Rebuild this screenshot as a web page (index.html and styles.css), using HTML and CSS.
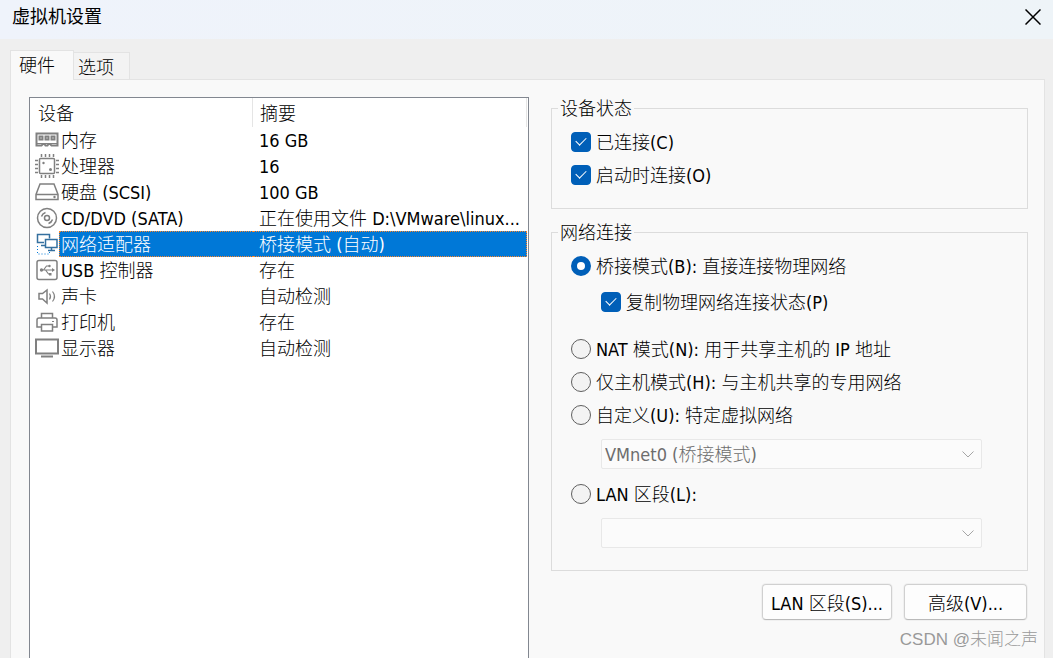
FILE: index.html
```html
<!DOCTYPE html>
<html lang="zh-CN">
<head>
	<meta charset="UTF-8">
	<meta name="viewport" content="width=device-width, initial-scale=1.0">
	<title>虚拟机设置</title>
	<link rel="stylesheet" href="styles.css">
</head>
<body>
	<header class="titulo">
		<h1>虚拟机设置</h1>
		<button type="button" class="fechar" aria-label="关闭">
			<svg width="16" height="16" viewBox="0 0 16 16"><path d="M0.5 0.5L15.5 15.5M15.5 0.5L0.5 15.5"/></svg>
		</button>
	</header>
	<nav class="abas">
		<button type="button" class="aba ativa">硬件</button>
		<button type="button" class="aba">选项</button>
	</nav>
	<main class="painel">
		<div class="lista">
			<table>
				<colgroup>
					<col class="col-icone">
					<col class="col-nome">
					<col>
				</colgroup>
				<thead>
					<tr>
						<th colspan="2">设备</th>
						<th>摘要</th>
					</tr>
				</thead>
				<tbody>
					<tr>
						<td class="icone"><svg viewBox="0 0 24 26"><path d="M1.500 6.500h21v12h-6l-1.500-1.500h-1.500l-1 1.500h-2l-1-1.500h-1.500l-1.500 1.500h-5z" stroke-width="2"/><path d="M1.500 16.500h21" /><path d="M4.500 9.500h3v3h-3zM10.500 9.500h3v3h-3zM16.500 9.500h3v3h-3z" stroke-width="2"/></svg></td>
						<td>内存</td>
						<td>16 GB</td>
					</tr>
					<tr>
						<td class="icone"><svg viewBox="0 0 24 26"><rect x="4.500" y="5.500" width="15" height="15" rx="1" stroke-width="1.500"/><path d="M6.500 1v3M10.500 1v3M14.500 1v3M18.500 1v3M6.500 22v3M10.500 22v3M14.500 22v3M18.500 22v3M0 7.500h3M0 11.500h3M0 15.500h3M0 19.500h3M21 7.500h3M21 11.500h3M21 15.500h3M21 19.500h3" stroke-width="1.500"/><circle class="cheio" cx="8.500" cy="10" r="1.200"/><circle class="cheio" cx="15.500" cy="16.500" r="1.500"/></svg></td>
						<td>处理器</td>
						<td>16</td>
					</tr>
					<tr>
						<td class="icone"><svg viewBox="0 0 24 26"><path d="M5 5h14l4 10.500v5h-22v-5zM1 15.500h22" stroke-width="1.500"/><circle class="cheio" cx="19.500" cy="18" r="1.200"/></svg></td>
						<td>硬盘 (SCSI)</td>
						<td>100 GB</td>
					</tr>
					<tr>
						<td class="icone"><svg viewBox="0 0 24 26"><circle cx="12" cy="13" r="9.500" stroke-width="1.500"/><circle cx="12" cy="13" r="2.500" stroke-width="1.500"/><path d="M6.500 11.500a6 6 0 0 1 4-4M17.500 14.500a6 6 0 0 1-4 4" stroke-width="1.500"/></svg></td>
						<td>CD/DVD (SATA)</td>
						<td>正在使用文件 D:\VMware\linux...</td>
					</tr>
					<tr class="selecionada">
						<td class="icone"><svg viewBox="0 0 24 26"><path d="M9 11.500H2.500v-8h12v4M6 14.500h4" stroke-width="1.500"/><path d="M10.500 8.500h11.500v8h-11.500zM16.500 16.500v3M13 19.500h7" stroke-width="1.500"/><path class="pontilhado" d="M2.500 15v8h12v-3"/></svg></td>
						<td>网络适配器</td>
						<td>桥接模式 (自动)</td>
					</tr>
					<tr>
						<td class="icone"><svg viewBox="0 0 24 26"><rect x="2" y="3.500" width="20" height="19" rx="2" stroke-width="1.500"/><path d="M7 13h11M8.500 13l3-4h3M10.500 13l3 4h2" stroke-width="1.200"/><path class="cheio" d="M17 11l3 2-3 2z"/><circle class="cheio" cx="6.500" cy="13" r="1.700"/><circle class="cheio" cx="14.500" cy="9" r="1.200"/><path class="cheio" d="M14 16h2.500v2.500H14z"/></svg></td>
						<td>USB 控制器</td>
						<td>存在</td>
					</tr>
					<tr>
						<td class="icone"><svg viewBox="0 0 24 26"><path d="M4 10.500h3.500l4.500-3.500v13l-4.500-4H4z" stroke-width="1.500"/><path d="M14.500 10.500q2 3 0 6M17.500 8.500q4 5 0 10" stroke-width="1.200"/></svg></td>
						<td>声卡</td>
						<td>自动检测</td>
					</tr>
					<tr>
						<td class="icone"><svg viewBox="0 0 24 26"><path d="M6.500 9V4.500h11V9M6.500 18h-4.500V11q0-2 2-2h16q2 0 2 2v7h-4.500M6.500 15.500h11v6.500h-11z" stroke-width="1.500"/><path d="M17 12.500h2"/></svg></td>
						<td>打印机</td>
						<td>存在</td>
					</tr>
					<tr>
						<td class="icone"><svg viewBox="0 0 24 26"><path d="M1 4.500h22v14h-22z" stroke-width="2"/><path d="M6 21.500h12" stroke-width="2"/></svg></td>
						<td>显示器</td>
						<td>自动检测</td>
					</tr>
				</tbody>
			</table>
		</div>
		<form class="opcoes">
			<fieldset class="estado">
				<legend>设备状态</legend>
				<label class="linha"><input type="checkbox" checked> 已连接(C)</label>
				<label class="linha"><input type="checkbox" checked> 启动时连接(O)</label>
			</fieldset>
			<fieldset class="rede">
				<legend>网络连接</legend>
				<label class="linha"><input type="radio" name="rede" checked> 桥接模式(B): 直接连接物理网络</label>
				<label class="linha replicar"><input type="checkbox" checked> 复制物理网络连接状态(P)</label>
				<label class="linha"><input type="radio" name="rede"> NAT 模式(N): 用于共享主机的 IP 地址</label>
				<label class="linha"><input type="radio" name="rede"> 仅主机模式(H): 与主机共享的专用网络</label>
				<label class="linha"><input type="radio" name="rede"> 自定义(U): 特定虚拟网络</label>
				<div class="selecao">
					<select aria-label="特定虚拟网络" disabled>
						<option>VMnet0 (桥接模式)</option>
					</select>
					<svg width="12" height="7" viewBox="0 0 12 7"><path d="M0.500 0.500L6 6L11.500 0.500"/></svg>
				</div>
				<label class="linha"><input type="radio" name="rede"> LAN 区段(L):</label>
				<div class="selecao">
					<select aria-label="LAN 区段" disabled>
						<option></option>
					</select>
					<svg width="12" height="7" viewBox="0 0 12 7"><path d="M0.500 0.500L6 6L11.500 0.500"/></svg>
				</div>
			</fieldset>
			<div class="botoes">
				<button type="button" class="btn">LAN 区段(S)...</button>
				<button type="button" class="btn">高级(V)...</button>
			</div>
		</form>
	</main>
	<p class="marca">CSDN @未闻之声</p>
</body>
</html>
```
FILE: styles.css
```css
* {
	margin: 0;
	padding: 0;
	box-sizing: border-box;
	font-family: "DejaVu Sans Condensed", "Noto Sans CJK SC", sans-serif;
	font-size: 18px;
	font-weight: 300;
}
body {
	display: flex;
	flex-direction: column;
	height: 100vh;
	overflow: hidden;
	background-color: #efefef;
	color: black;
	line-height: 24px;
}
svg {
	display: block;
	fill: none;
}
.titulo {
	display: flex;
	justify-content: space-between;
	align-items: center;
	height: 39px;
	padding: 0 12px 6px;
	background: linear-gradient(to right, #eff3fb, #eef4f8);
}
.titulo h1 {
	font-weight: 400;
}
.fechar {
	border: none;
	background: none;
}
.fechar svg {
	stroke: black;
	stroke-width: 1.5;
}
.abas {
	display: flex;
	align-items: flex-end;
	height: 41px;
	padding-left: 10px;
	position: relative;
	margin-bottom: -1px;
}
.aba {
	height: 28px;
	width: 56px;
	padding: 0 4px 3px;
	border: solid 1px #e3e3e3;
	border-left: none;
	background-color: #f3f3f3;
	text-align: left;
}
.aba.ativa {
	width: 64px;
	height: 30px;
	padding: 0 8px 3px;
	border-left: solid 1px #e3e3e3;
	border-bottom: none;
	background-color: #f9f9f9;
}
.painel {
	flex: 1;
	display: grid;
	grid-template-columns: 500fr 477fr;
	gap: 22px;
	margin: 0 8px 0 10px;
	padding: 17px 16px 0 18px;
	border: solid 1px #e3e3e3;
	border-bottom: none;
	background-color: #f9f9f9;
}
.lista {
	padding-right: 1px;
	border: solid 1px #828790;
	border-bottom: none;
	background-color: white;
}
.lista table {
	width: 100%;
	table-layout: fixed;
	border-spacing: 0;
	line-height: 22px;
}
.col-icone {
	width: 29px;
}
.col-nome {
	width: 194px;
}
.lista th {
	height: 29px;
	padding: 2px 7px 0;
	border-right: solid 1px #e5e5e5;
	text-align: left;
}
.lista th:first-child {
	padding-left: 8px;
}
.lista td {
	height: 26px;
	padding: 2px 2px 0;
	white-space: nowrap;
	overflow: hidden;
}
.lista td:last-child {
	padding: 2px 0 0 6px;
}
.lista .icone {
	padding: 0 0 0 5px;
}
.icone svg {
	width: 24px;
	height: 26px;
	stroke: #808080;
}
.icone .cheio {
	fill: #808080;
	stroke: none;
}
.selecionada td:not(.icone) {
	background-color: #0078d7;
	color: white;
	border-top: dotted 1px #ff8728;
	border-bottom: dotted 1px #ff8728;
}
.selecionada td:nth-child(2) {
	border-left: dotted 1px #ff8728;
	padding-left: 1px;
}
.selecionada td:last-child {
	border-right: dotted 1px #ff8728;
}
.selecionada .icone svg {
	stroke: #35709f;
}
.icone .pontilhado {
	stroke: #0078d7;
	stroke-dasharray: 1 2;
}
fieldset {
	min-width: 0;
	padding: 5px 0 17px 19px;
	border: solid 1px #dcdcdc;
}
legend {
	height: 23px;
	margin-left: -13px;
	padding: 0 2px;
}
.rede {
	margin-top: 12px;
	padding-bottom: 14px;
}
.linha {
	display: flex;
	align-items: center;
	gap: 5px;
	height: 33px;
	padding-top: 2px;
	white-space: nowrap;
}
.replicar {
	margin: 3px 0 14px 30px;
}
.linha input {
	appearance: none;
	display: grid;
	place-content: center;
	width: 20px;
	height: 20px;
	margin-bottom: 2px;
	border: solid 1px #5f5f5f;
	background-color: #f3f3f3;
}
.linha input[type="radio"] {
	border-radius: 50%;
}
.linha input[type="radio"]:checked {
	border: solid 6px #005fb8;
	background-color: white;
}
.linha input[type="checkbox"] {
	border-color: #005fb8;
	border-radius: 4px;
	background-color: #005fb8;
}
.linha input[type="checkbox"]::before {
	content: "";
	width: 9px;
	height: 5px;
	margin-bottom: 3px;
	border-left: solid 1px white;
	border-bottom: solid 1px white;
	transform: rotate(-45deg);
}
.selecao {
	position: relative;
	margin: 8px 45px 8px 30px;
}
.selecao select {
	appearance: none;
	display: block;
	width: 100%;
	height: 30px;
	padding: 0 3px;
	border: solid 1px #e8e8e8;
	border-radius: 2px;
	background-color: #fbfbfb;
	color: #6d6d6d;
	opacity: 1;
}
.selecao svg {
	position: absolute;
	right: 8px;
	top: 12px;
	stroke: #a5a5a5;
}
.botoes {
	display: flex;
	justify-content: flex-end;
	gap: 12px;
	margin: 13px 1px 0 0;
}
.btn {
	min-width: 123px;
	height: 36px;
	padding: 0 8px;
	border: solid 1px #d0d0d0;
	border-bottom-color: #bababa;
	border-radius: 4px;
	background-color: #fdfdfd;
	box-shadow: 0 0 0 1px #f0f0f0;
}
.marca {
	position: absolute;
	right: 15px;
	bottom: 6px;
	color: #999999;
	font-family: "Liberation Sans", "Noto Sans CJK SC", sans-serif;
	font-size: 17px;
}
```
